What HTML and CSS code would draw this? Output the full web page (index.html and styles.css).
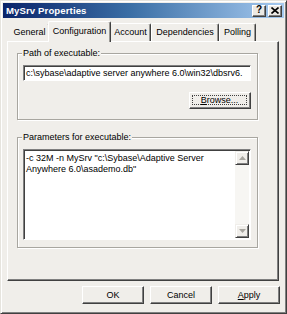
FILE: index.html
```html
<!DOCTYPE html>
<html>
<head>
<meta charset="utf-8">
<link rel="stylesheet" href="styles.css">
</head>
<body>
<div class="window">
  <div class="titlebar">
    <span class="title">MySrv Properties</span>
    <div class="tbtns">
      <span class="tbtn help">?</span>
      <span class="tbtn close">
        <svg width="8" height="7" viewBox="0 0 8 7"><path d="M0.5 0.5 L7.5 6.5 M7.5 0.5 L0.5 6.5" stroke="#000" stroke-width="1.6"/></svg>
      </span>
    </div>
  </div>
  <div class="tabs">
    <div class="tab t-general">General</div>
    <div class="tab t-config active">Configuration</div>
    <div class="tab t-account">Account</div>
    <div class="tab t-deps">Dependencies</div>
    <div class="tab t-polling">Polling</div>
  </div>
  <div class="panel">
    <div class="group group-path">
      <span class="legend">Path of executable:</span>
      <div class="field">c:\sybase\adaptive server anywhere 6.0\win32\dbsrv6.</div>
      <div class="browse-row">
        <div class="btn browse"><span class="focus"><u>B</u>rowse...</span></div>
      </div>
    </div>
    <div class="group group-params">
      <span class="legend">Parameters for executable:</span>
      <div class="memo">
        <div class="memo-text">-c 32M -n MySrv "c:\Sybase\Adaptive Server<br>Anywhere 6.0\asademo.db"</div>
        <div class="scrollbar">
          <div class="sbtn">
            <svg width="7" height="4" viewBox="0 0 7 4"><path d="M3.5 0 L7 4 L0 4 Z" fill="#a8a6a0"/></svg>
          </div>
          <div class="track"></div>
          <div class="sbtn">
            <svg width="7" height="4" viewBox="0 0 7 4"><path d="M0 0 L7 0 L3.5 4 Z" fill="#a8a6a0"/></svg>
          </div>
        </div>
      </div>
    </div>
  </div>
  <div class="buttons">
    <div class="btn dlg">OK</div>
    <div class="btn dlg">Cancel</div>
    <div class="btn dlg"><span><u>A</u>pply</span></div>
  </div>
</div>
</body>
</html>
```

FILE: styles.css
```css
* { box-sizing: border-box; }
html, body {
  margin: 0;
  padding: 0;
  background: #f0eeea;
}
body {
  font-family: "Liberation Sans", Arial, sans-serif;
  font-size: 9px;
  color: #000;
}
.window {
  width: 287px;
  height: 314px;
  background: #f0eeea;
  border: 1px solid;
  border-color: #e6e4de #404040 #404040 #e6e4de;
  box-shadow: inset 1px 1px 0 #fff, inset -1px -1px 0 #808080;
  padding: 2px;
  display: flex;
  flex-direction: column;
}
.titlebar {
  height: 15px;
  background: linear-gradient(to right, #0a246a 0%, #3a6ea5 45%, #a6caf0 100%);
  display: flex;
  align-items: center;
  justify-content: space-between;
  padding: 0 2px 0 3px;
}
.title {
  color: #fff;
  font-weight: bold;
  font-size: 9.6px;
  letter-spacing: 0.1px;
}
.tbtns {
  display: flex;
  gap: 2px;
}
.tbtn {
  width: 14px;
  height: 12px;
  background: #ece9e4;
  border: 1px solid;
  border-color: #fff #404040 #404040 #fff;
  box-shadow: inset -1px -1px 0 #808080;
  display: flex;
  align-items: center;
  justify-content: center;
  font-weight: bold;
  font-size: 10px;
  line-height: 1;
}
.tbtn.help { padding-bottom: 1px; }
.tabs {
  margin-top: 3px;
  margin-left: 6px;
  height: 20px;
  display: flex;
  align-items: flex-end;
  position: relative;
  z-index: 2;
}
.tab {
  height: 18px;
  border-top: 1px solid #fff;
  border-left: 1px solid #fff;
  border-right: 1px solid #404040;
  box-shadow: inset -1px 0 0 #9a9894;
  border-radius: 2px 2px 0 0;
  display: flex;
  align-items: center;
  justify-content: center;
  padding-bottom: 1px;
  background: #f0eeea;
}
.t-general { width: 41px; border-left-color: #f0eeea; border-top-color: #f0eeea; }
.t-config { width: 63px; }
.t-account { width: 41px; }
.t-deps { width: 68px; }
.t-polling { width: 37px; }
.tab.active {
  height: 21px;
  margin: 0 -1px -1px -2px;
  padding-bottom: 3px;
  border-right-color: #404040;
  z-index: 3;
}
.panel {
  margin: 0 5px 0 4px;
  height: 240px;
  border: 1px solid;
  border-color: #fff #404040 #404040 #fff;
  box-shadow: inset -1px -1px 0 #808080;
  padding: 11px 20px 0 9px;
  display: flex;
  flex-direction: column;
  gap: 17px;
}
.group {
  position: relative;
  border: 1px solid #a8a6a0;
  box-shadow: inset 1px 1px 0 #fff, 1px 1px 0 #fff;
  padding: 11px 6px 0 5px;
}
.legend {
  position: absolute;
  top: -7px;
  left: 4px;
  background: #f0eeea;
  padding: 0 1px;
  line-height: 12px;
}
.group-path { height: 67px; }
.group-params { height: 111px; }
.field {
  height: 16px;
  background: #fff;
  border: 1px solid;
  border-color: #808080 #fff #fff #808080;
  box-shadow: inset 1px 1px 0 #404040;
  padding: 0 0 0 2px;
  line-height: 14px;
  white-space: nowrap;
  overflow: hidden;
}
.browse-row {
  display: flex;
  justify-content: flex-end;
  margin-top: 11px;
}
.btn {
  background: #f0eeea;
  border: 1px solid;
  border-color: #fff #404040 #404040 #fff;
  box-shadow: inset -1px -1px 0 #808080;
  display: flex;
  align-items: center;
  justify-content: center;
}
.browse {
  width: 62px;
  height: 17px;
  padding: 2px 3px 3px 2px;
}
.focus {
  flex: 1;
  height: 100%;
  border: 1px dotted #404040;
  display: flex;
  align-items: center;
  justify-content: center;
}
.memo {
  height: 91px;
  background: #fff;
  border: 1px solid;
  border-color: #808080 #fff #fff #808080;
  box-shadow: inset 1px 1px 0 #404040;
  display: flex;
  padding: 1px 1px 1px 1px;
}
.memo-text {
  flex: 1;
  padding: 2px 0 0 1px;
  line-height: 10.5px;
  white-space: nowrap;
  overflow: hidden;
}
.scrollbar {
  width: 14px;
  display: flex;
  flex-direction: column;
}
.sbtn {
  height: 14px;
  background: #f0eeea;
  border: 1px solid;
  border-color: #f0eeea #404040 #404040 #f0eeea;
  box-shadow: inset 1px 1px 0 #fff, inset -1px -1px 0 #808080;
  display: flex;
  align-items: center;
  justify-content: center;
}
.track {
  flex: 1;
  background: #f7f6f3;
}
.buttons {
  margin-top: 5px;
  margin-right: 4px;
  display: flex;
  justify-content: flex-end;
  gap: 6px;
}
.dlg {
  width: 62px;
  height: 18px;
}
u { text-decoration: underline; text-underline-offset: 1px; }
```
